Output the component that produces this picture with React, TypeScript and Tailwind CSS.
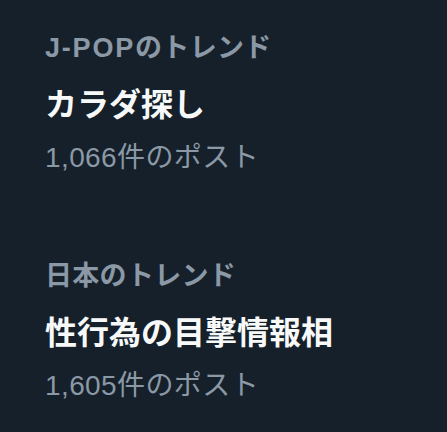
import React from "react";

const items = [
  { latin: "J-POP", label: "のトレンド", title: "カラダ探し", count: "1,066件のポスト" },
  { latin: "", label: "日本のトレンド", title: "性行為の目撃情報相", count: "1,605件のポスト" },
];

export default function App() {
  return (
    <div
      className="w-[447px] h-[432px] bg-[#15202b] overflow-hidden pl-[45px] pt-[28px] flex flex-col gap-[78px]"
      style={{ fontFamily: '"Liberation Sans", "Noto Sans CJK JP", sans-serif' }}
    >
      {items.map((it) => (
        <div key={it.title} className="flex flex-col">
          <div className="h-[40px] leading-[40px] text-[27px] tracking-[0.3px] font-bold text-[#8b98a5] whitespace-nowrap">
            {it.latin && <span className="tracking-[1.8px]">{it.latin}</span>}
            {it.label}
          </div>
          <div className="mt-[13px] h-[48px] leading-[48px] text-[32px] font-bold text-[#f7f9f9] whitespace-nowrap">
            {it.title}
          </div>
          <div className="mt-[9px] h-[40px] leading-[40px] text-[28px] tracking-[0.4px] text-[#8b98a5] whitespace-nowrap">
            {it.count}
          </div>
        </div>
      ))}
    </div>
  );
}
